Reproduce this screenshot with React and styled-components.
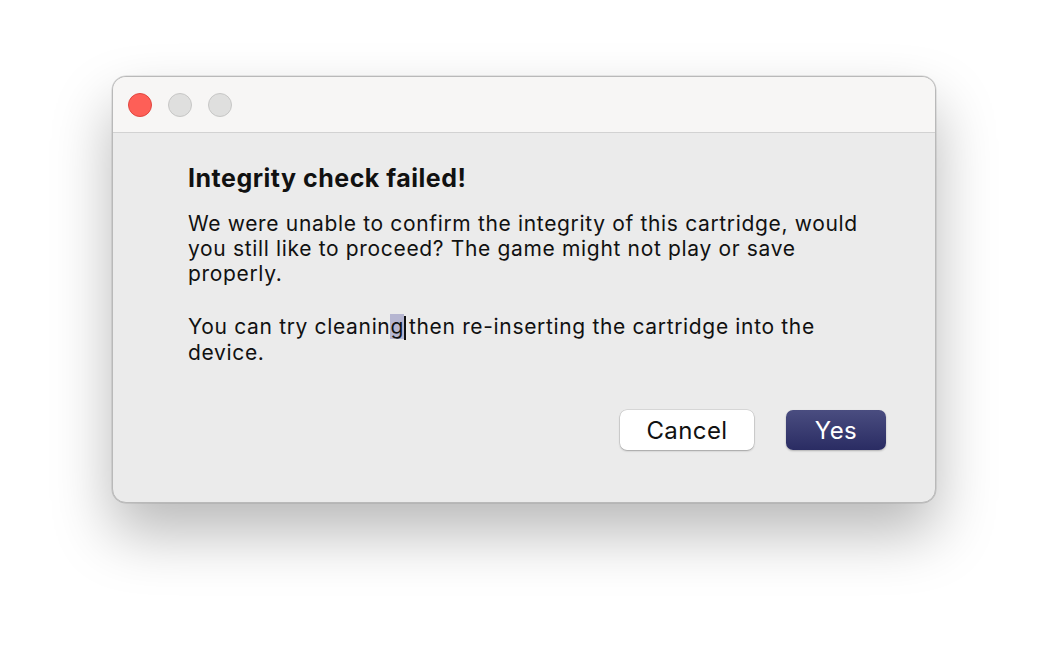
import React from "react";
import styled, { createGlobalStyle } from "styled-components";

const GlobalStyle = createGlobalStyle`
  html, body {
    margin: 0;
    padding: 0;
    background: #ffffff;
    font-family: Inter, "Liberation Sans", sans-serif;
  }
`;

const Page = styled.div`
  width: 1048px;
  height: 652px;
  display: flex;
  justify-content: center;
  align-items: flex-start;
  padding-top: 76px;
  box-sizing: border-box;
`;

const Window = styled.div`
  width: 824px;
  height: 427px;
  box-sizing: border-box;
  border: 1px solid #b9b9b9;
  border-radius: 14px;
  background: #ebebeb;
  overflow: hidden;
  display: flex;
  flex-direction: column;
  box-shadow: 0 30px 60px rgba(0, 0, 0, 0.28), 0 0 0 0.5px rgba(0, 0, 0, 0.15);
`;

const TitleBar = styled.div`
  height: 55px;
  flex-shrink: 0;
  background: #f7f6f5;
  border-bottom: 1px solid #d2d2d2;
  display: flex;
  align-items: center;
  gap: 16px;
  padding-left: 15px;
`;

const Light = styled.span`
  width: 24px;
  height: 24px;
  border-radius: 50%;
  box-sizing: border-box;
  background: ${(p) => (p.$active ? "#fe5f57" : "#dfdfde")};
  border: 1px solid ${(p) => (p.$active ? "#e1463f" : "#c7c7c6")};
`;

const Body = styled.div`
  flex: 1;
  display: flex;
  flex-direction: column;
  padding: 30px 49px 0 75px;
`;

const Title = styled.h1`
  margin: 0 0 18px;
  font-size: 25px;
  line-height: 30px;
  font-weight: 700;
  color: #111;
  letter-spacing: 0.5px;
`;

const Text = styled.p`
  margin: 0 0 28px;
  width: 690px;
  font-size: 21px;
  line-height: 25px;
  letter-spacing: 0.66px;
  color: #111;
`;

const Selected = styled.span`
  background: #b6b6d1;
`;

const Caret = styled.span`
  display: inline-block;
  width: 2px;
  height: 24px;
  background: #111;
  vertical-align: -6px;
  margin-right: 3px;
`;

const Actions = styled.div`
  display: flex;
  justify-content: flex-end;
  gap: 32px;
  margin-top: 17px;
`;

const Button = styled.button`
  height: 40px;
  min-width: ${(p) => (p.$primary ? "100px" : "134px")};
  border-radius: 7px;
  font-family: inherit;
  font-size: 24px;
  letter-spacing: 0.4px;
  padding: 0 16px;
  border: none;
  cursor: pointer;
  color: ${(p) => (p.$primary ? "#ffffff" : "#111")};
  background: ${(p) =>
    p.$primary ? "linear-gradient(#4a4d80, #2a2c63)" : "#ffffff"};
  box-shadow: ${(p) =>
    p.$primary
      ? "0 1px 2px rgba(0,0,0,0.25)"
      : "0 0 0 0.5px rgba(0,0,0,0.15), 0 1px 2px rgba(0,0,0,0.25)"};
`;

export default function App() {
  return (
    <>
      <GlobalStyle />
      <Page>
        <Window>
          <TitleBar>
            <Light $active />
            <Light />
            <Light />
          </TitleBar>
          <Body>
            <Title>Integrity check failed!</Title>
            <Text>
              We were unable to confirm the integrity of this cartridge, would
              you still like to proceed? The game might not play or save
              properly.
            </Text>
            <Text>
              You can try cleanin<Selected>g</Selected>
              <Caret />then re-inserting the cartridge into the device.
            </Text>
            <Actions>
              <Button>Cancel</Button>
              <Button $primary>Yes</Button>
            </Actions>
          </Body>
        </Window>
      </Page>
    </>
  );
}
